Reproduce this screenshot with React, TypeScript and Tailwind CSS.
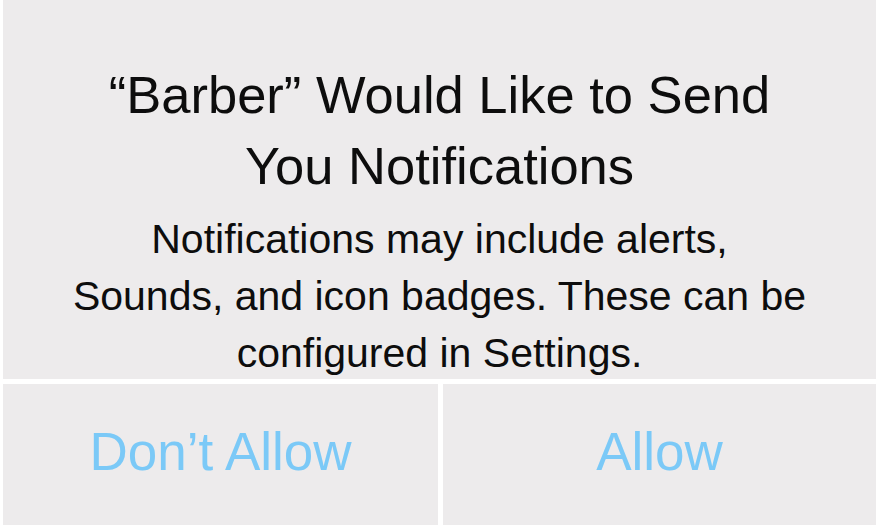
import React from "react";

export default function App() {
  return (
    <div className="w-[876px] h-[526px] bg-white flex flex-col pl-[3px] font-['Liberation_Sans',Arial,sans-serif] overflow-hidden">
      <section className="h-[379px] bg-[#edebec] flex flex-col items-center pt-[59px] text-[#0d0d0d]">
        <h1 className="text-[52.5px] leading-[71px] text-center">
          “Barber” Would Like to Send
          <br />
          You Notifications
        </h1>
        <p className="mt-[10px] text-[41px] leading-[57px] text-center">
          Notifications may include alerts,
          <br />
          Sounds, and icon badges. These can be
          <br />
          configured in Settings.
        </p>
      </section>
      <div className="mt-[5px] h-[141px] flex gap-[5px]">
        <button className="w-[435px] bg-[#edebec] flex items-center justify-center pb-[6px] text-[53px] text-[#7bc9f7]">
          Don’t Allow
        </button>
        <button className="flex-1 bg-[#edebec] flex items-center justify-center pb-[6px] text-[53px] text-[#7bc9f7]">
          Allow
        </button>
      </div>
    </div>
  );
}
